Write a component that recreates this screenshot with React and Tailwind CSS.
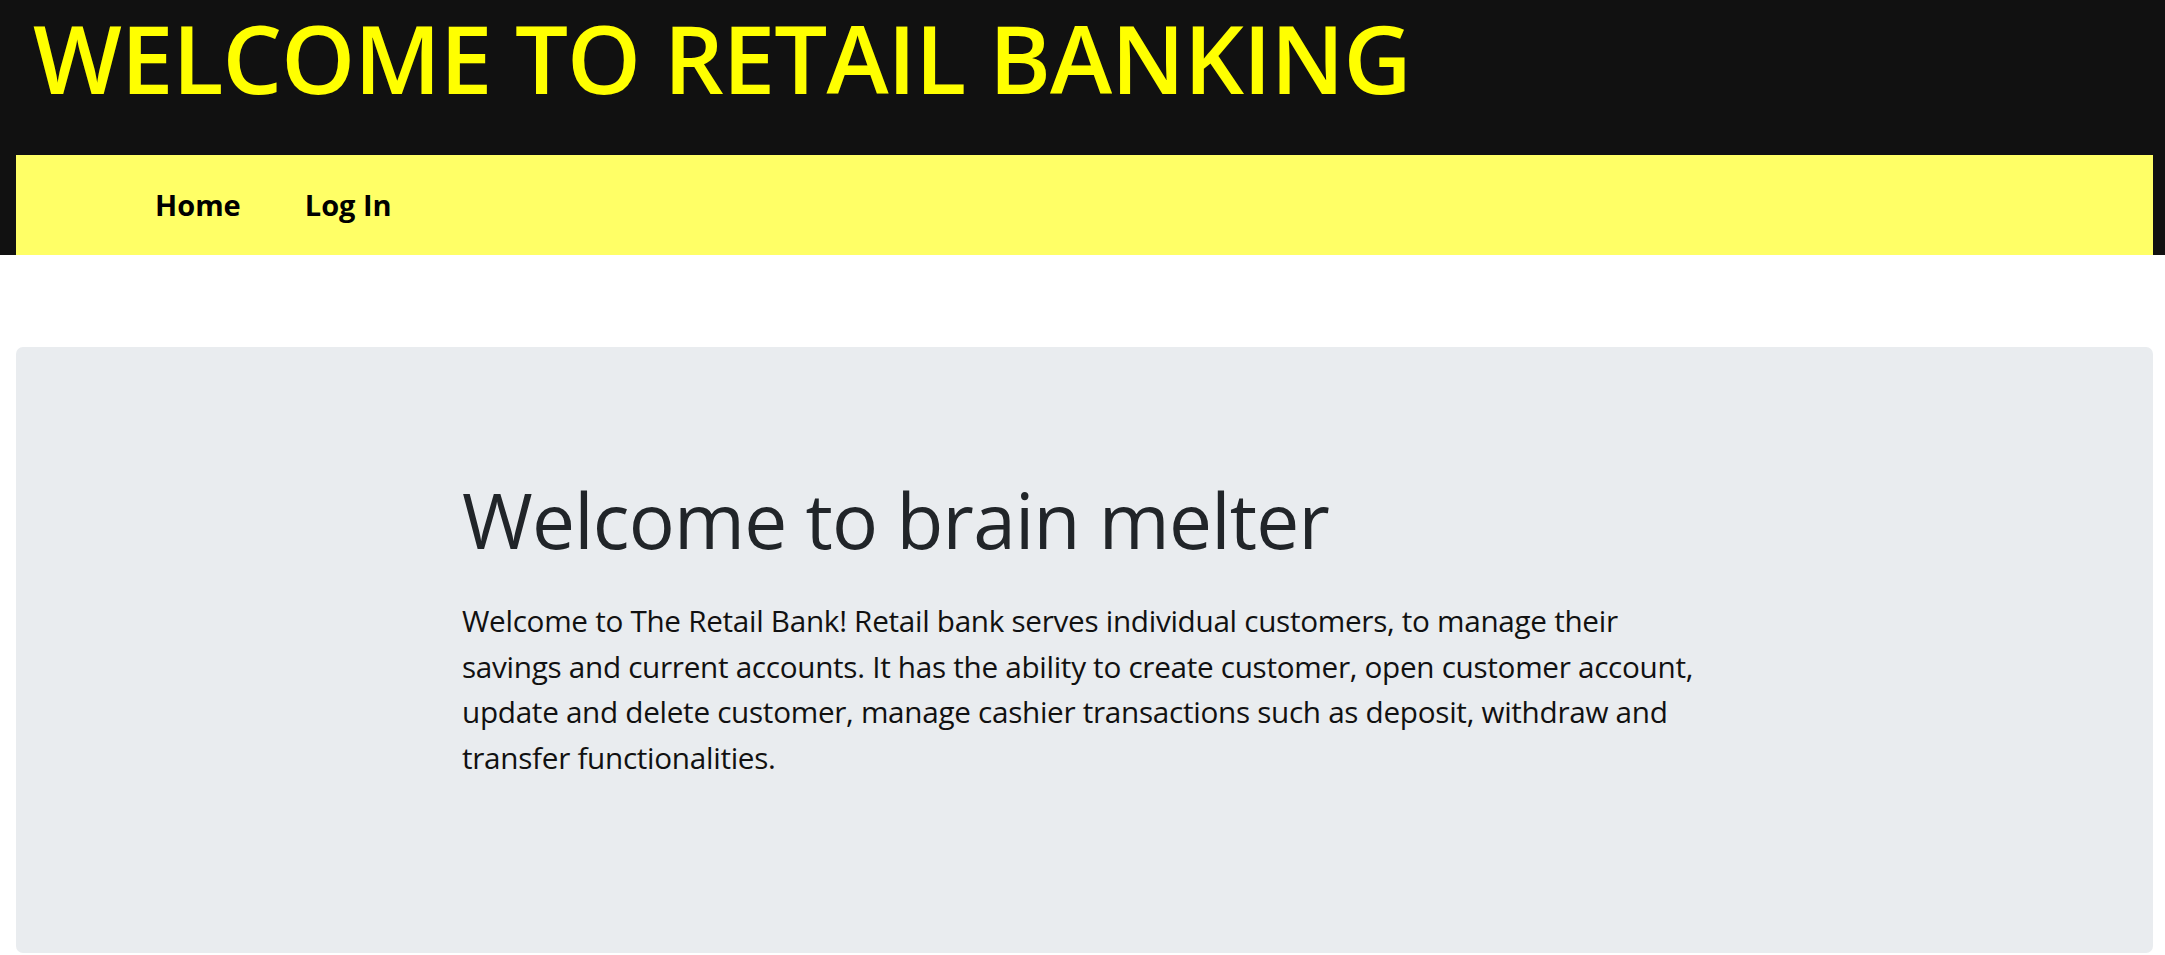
import React from "react";

function Header() {
  return (
    <header className="bg-[#111111] pl-[16px] pr-[12px]">
      <div className="h-[155px] pt-[2px] pl-[17px]">
        <h1 className="text-[#ffff00] text-[94px] font-semibold leading-[1.2] tracking-[-0.01em]">
          WELCOME TO RETAIL BANKING
        </h1>
      </div>
      <nav className="h-[100px] bg-[#ffff66] flex items-center gap-[64px] pl-[139px]">
        <a href="#" className="text-black text-[29px] font-bold">
          Home
        </a>
        <a href="#" className="text-black text-[29px] font-bold">
          Log In
        </a>
      </nav>
    </header>
  );
}

export default function App() {
  return (
    <div className="min-h-screen bg-white font-['Open_Sans',sans-serif]">
      <Header />
      <main className="pt-[92px] pl-[16px] pr-[12px]">
        <section className="h-[606px] bg-[#e9ecef] rounded-[7px] pt-[127px] pl-[446px]">
          <div className="w-[1262px]">
            <h2 className="text-[#212529] text-[76.6px] font-medium leading-[1.2] tracking-[-0.01em]">
              Welcome to brain melter
            </h2>
            <p className="mt-[32px] text-[#111111] text-[29.7px] leading-[45.7px] tracking-[-0.01em]">
              Welcome to The Retail Bank! Retail bank serves individual customers, to manage their
              savings and current accounts. It has the ability to create customer, open customer account,
              update and delete customer, manage cashier transactions such as deposit, withdraw and
              transfer functionalities.
            </p>
          </div>
        </section>
      </main>
    </div>
  );
}
